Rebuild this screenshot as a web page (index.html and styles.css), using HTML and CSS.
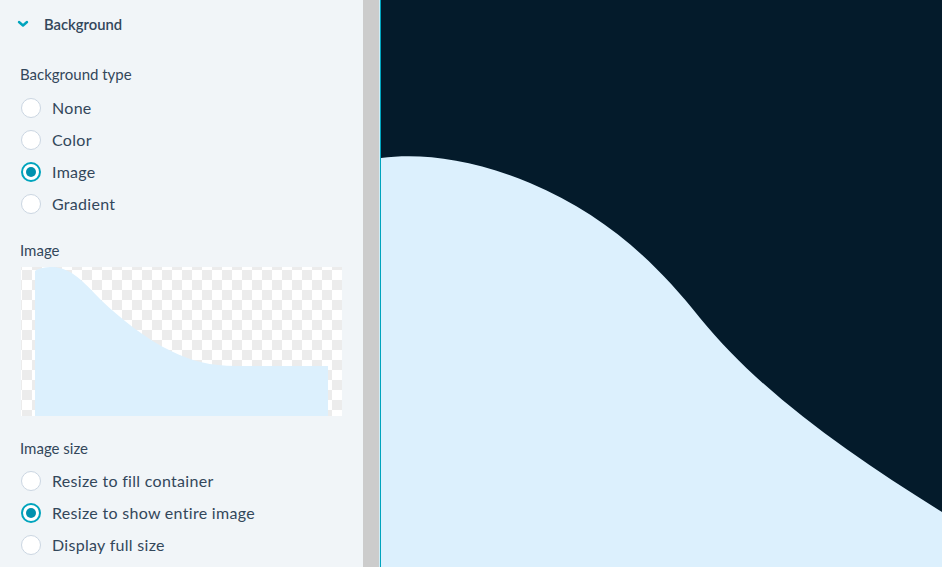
FILE: index.html
```html
<!DOCTYPE html>
<html>
<head>
<meta charset="utf-8">
<link rel="stylesheet" href="styles.css">
</head>
<body>
<div class="app">
  <aside class="panel">
    <div class="section-header">
      <svg class="chevron" width="12" height="8" viewBox="0 0 12 8"><path d="M2 2 L6 5.5 L10 2" fill="none" stroke="#00a4bd" stroke-width="2.4" stroke-linecap="round" stroke-linejoin="round"/></svg>
      <span class="section-title">Background</span>
    </div>
    <div class="fields">
      <div class="field-label first">Background type</div>
      <div class="radio-list">
        <label class="radio"><span class="dot"></span><span class="radio-text">None</span></label>
        <label class="radio"><span class="dot"></span><span class="radio-text">Color</span></label>
        <label class="radio"><span class="dot checked"></span><span class="radio-text">Image</span></label>
        <label class="radio"><span class="dot"></span><span class="radio-text">Gradient</span></label>
      </div>
      <div class="field-label image-label">Image</div>
      <div class="thumb">
        <svg width="321" height="149" viewBox="0 0 321 149">
          <defs>
            <pattern id="chk" width="20" height="20" patternUnits="userSpaceOnUse" x="1" y="3">
              <rect width="20" height="20" fill="#ffffff"/>
              <rect width="10" height="10" fill="#ececec"/>
              <rect x="10" y="10" width="10" height="10" fill="#ececec"/>
            </pattern>
          </defs>
          <rect width="321" height="149" fill="url(#chk)"/>
          <path d="M14 4 C18 1 24 0 32 0 C50 1 62 14 80 33 C100 52 125 72 150 84 C170 94 190 99 215 99 L307 99 L307 149 L14 149 Z" fill="#dcf0fd"/>
        </svg>
      </div>
      <div class="field-label size-label">Image size</div>
      <div class="radio-list">
        <label class="radio"><span class="dot"></span><span class="radio-text">Resize to fill container</span></label>
        <label class="radio"><span class="dot checked"></span><span class="radio-text">Resize to show entire image</span></label>
        <label class="radio"><span class="dot"></span><span class="radio-text">Display full size</span></label>
      </div>
    </div>
  </aside>
  <div class="splitter"></div>
  <div class="edge"></div>
  <main class="canvas">
    <svg width="561" height="567" viewBox="381 0 561 567">
      <rect x="381" y="0" width="561" height="567" fill="#041b2b"/>
      <path d="M381 158 C420 153 470 158 530 183 C600 213 650 255 700 318 C760 392 850 455 942 512 L942 567 L381 567 Z" fill="#dcf0fd"/>
    </svg>
  </main>
</div>
</body>
</html>
```
FILE: styles.css
```css
* { box-sizing: border-box; }
html, body { margin: 0; padding: 0; }
body {
  font-family: Lato, "Open Sans", sans-serif;
  color: #33475b;
  width: 942px;
  height: 567px;
  overflow: hidden;
}
.app {
  display: flex;
  height: 567px;
}
.panel {
  width: 363px;
  flex: none;
  background: #f1f5f8;
}
.section-header {
  height: 48px;
  display: flex;
  align-items: center;
  padding-left: 17px;
}
.chevron { margin-right: 15px; }
.section-title {
  font-size: 14.8px;
  font-weight: 600;
}
.fields { padding: 0 20px; }
.field-label {
  font-size: 15px;
  line-height: 20px;
}
.field-label.first { margin-top: 16px; margin-bottom: 8px; }
.field-label.image-label { margin-top: 20px; margin-bottom: 7px; }
.field-label.size-label { margin-top: 22px; margin-bottom: 7px; }
.radio-list { display: flex; flex-direction: column; }
.radio {
  height: 32px;
  display: flex;
  align-items: center;
  font-size: 16px;
  letter-spacing: 0.3px;
}
.radio-text { padding-bottom: 2px; }
.dot {
  width: 20px;
  height: 20px;
  border-radius: 50%;
  background: #ffffff;
  border: 1px solid #cbd6e2;
  margin-left: 1px;
  margin-right: 11px;
  flex: none;
  display: flex;
  align-items: center;
  justify-content: center;
}
.dot.checked {
  border: 2px solid #00a4bd;
}
.dot.checked::after {
  content: "";
  width: 10px;
  height: 10px;
  border-radius: 50%;
  background: #0091ae;
}
.thumb {
  width: 321px;
  height: 149px;
  margin-left: 1px;
}
.thumb svg { display: block; }
.splitter {
  width: 16px;
  flex: none;
  background: #cccccc;
}
.edge {
  width: 2px;
  flex: none;
  background: linear-gradient(to right, #cfeef8 0 1px, #00a4bd 1px 2px);
}
.canvas {
  flex: 1;
  overflow: hidden;
}
.canvas svg { display: block; }
```
